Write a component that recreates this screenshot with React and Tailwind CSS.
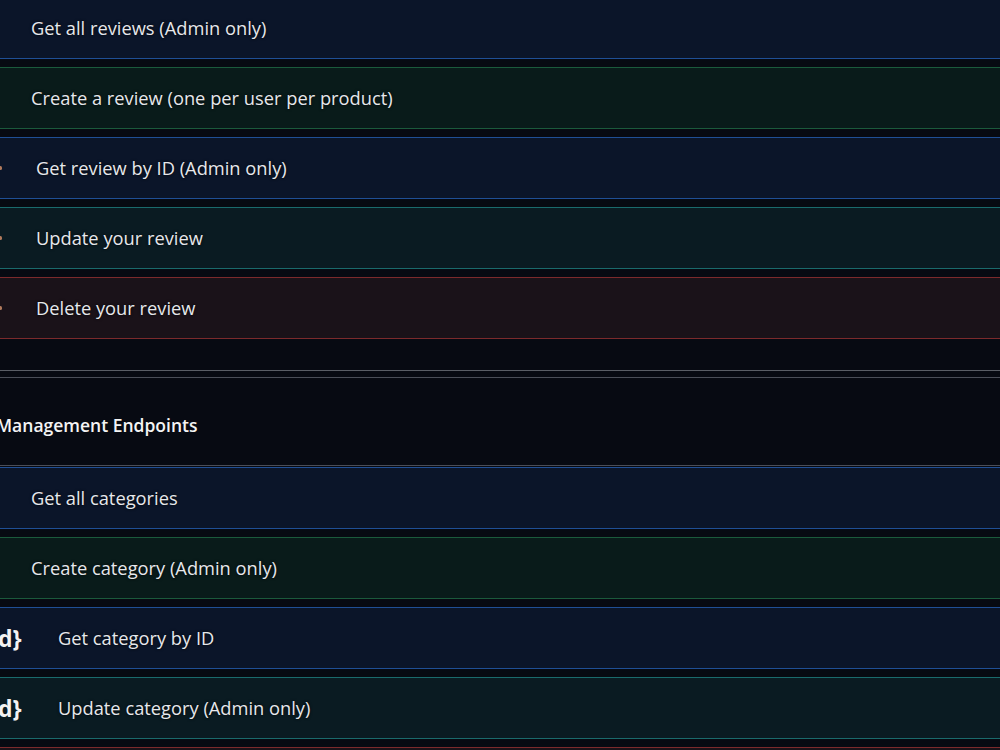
import React from "react";

const styles = {
  get: "bg-[#0b1529] border-[#1f4f95]",
  post: "bg-[#091b1a] border-[#1b5a3c]",
  put: "bg-[#0a1b22] border-[#1a6a6c]",
  del: "bg-[#1a1219] border-[#7c2a2c]",
};

function Row({ kind, summary, lead, tail }) {
  return (
    <div className={`flex h-[62px] items-center border-y ${styles[kind]}`}>
      <div className={`flex shrink-0 items-center ${lead}`}>
        {tail === "dot" && (
          <span className="ml-[-1px] block h-[4px] w-[3px] rounded-full bg-[#b07a5c]" />
        )}
        {tail === "d" && (
          <span className="ml-[-2px] text-[23px] font-bold leading-none text-[#f2f2f2]">d&#125;</span>
        )}
      </div>
      <span className="text-[18.3px] text-[#e6e8ec] [text-shadow:0_0_3px_rgba(0,0,0,0.9)]">{summary}</span>
    </div>
  );
}

export default function App() {
  return (
    <div
      className="h-[750px] w-[1000px] overflow-hidden bg-[#070a12]"
      style={{ fontFamily: '"Open Sans", "Noto Sans", sans-serif' }}
    >
      <div className="mt-[-3px] flex flex-col gap-2">
        <Row kind="get" lead="w-[31px]" summary="Get all reviews (Admin only)" />
        <Row kind="post" lead="w-[31px]" summary="Create a review (one per user per product)" />
        <Row kind="get" lead="w-[36px]" tail="dot" summary="Get review by ID (Admin only)" />
        <Row kind="put" lead="w-[36px]" tail="dot" summary="Update your review" />
        <Row kind="del" lead="w-[36px]" tail="dot" summary="Delete your review" />
      </div>
      <div className="mt-[31px] border-t border-[#5a5e66]" />
      <div className="mt-[6px] flex h-[89px] items-center border-y border-[#4a4e58] bg-[#070a12] pt-[7px]">
        <span className="ml-[-4px] text-[17.5px] font-semibold text-[#f4f4f4]">Management Endpoints</span>
      </div>
      <div className="mt-[1px] flex flex-col gap-2">
        <Row kind="get" lead="w-[31px]" summary="Get all categories" />
        <Row kind="post" lead="w-[31px]" summary="Create category (Admin only)" />
        <Row kind="get" lead="w-[58px]" tail="d" summary="Get category by ID" />
        <Row kind="put" lead="w-[58px]" tail="d" summary="Update category (Admin only)" />
        <Row kind="del" lead="w-[58px]" tail="d" summary="Delete category (Admin only)" />
      </div>
    </div>
  );
}
